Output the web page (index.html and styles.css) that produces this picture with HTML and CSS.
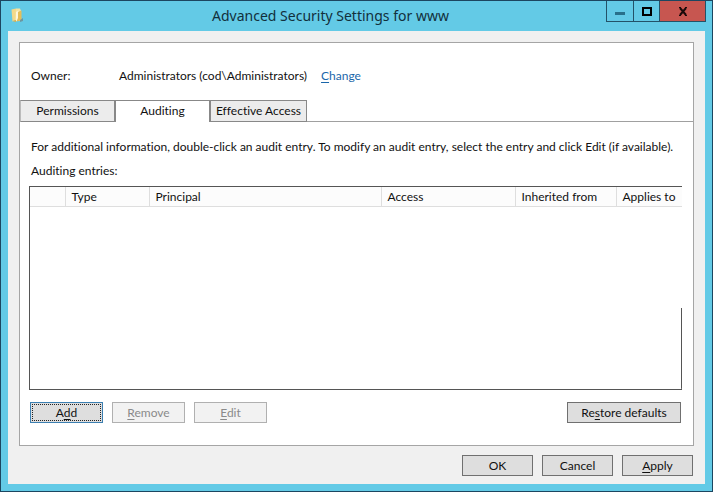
FILE: index.html
```html
<!DOCTYPE html>
<html lang="en">
<head>
    <meta charset="UTF-8">
    <meta name="viewport" content="width=device-width, initial-scale=1.0">
    <title>Advanced Security Settings for www</title>
    <link rel="stylesheet" href="styles.css">
</head>
<body>

<div class="window">
    <header class="titlebar">
        <svg class="folder-icon" width="14" height="16" viewBox="0 0 14 16" aria-hidden="true">
            <path d="M0.5 1.5L5 0.5V12L1.5 13.5Z" fill="#f3d98a"/>
            <path d="M5 0.5H9L10 3V13H4Z" fill="#f6e3a2"/>
            <path d="M5 4L7.5 2.5V11L5 13.5Z" fill="#fdf6dc"/>
            <path d="M7 4L10.5 2.5V12.5L5.5 13.5L7 10Z" fill="#e5bd58"/>
            <path d="M1.5 13L5 12V14Z" fill="#d9ae4a"/>
            <path d="M9 12L12 10V13L9 14Z" fill="#6d97a0"/>
        </svg>
        <h1>Advanced Security Settings for www</h1>
        <div class="window-controls">
            <button class="control minimize" aria-label="Minimize">
                <svg width="10" height="10" viewBox="0 0 10 10"><path d="M0 6H10V9H0Z" fill="#28708a"/></svg>
            </button>
            <button class="control maximize" aria-label="Maximize">
                <svg width="10" height="10" viewBox="0 0 10 10"><path d="M1 2H9V9H1Z" fill="none" stroke="#000" stroke-width="2"/></svg>
            </button>
            <button class="control close" aria-label="Close">
                <svg width="10" height="10" viewBox="0 0 10 10"><path d="M2 2L8 9M8 2L2 9" stroke="#1a0a0a" stroke-width="2"/><path d="M1 1.5H3M7 1.5H9M1 9.5H3M7 9.5H9" stroke="#1a0a0a" stroke-width="1"/></svg>
            </button>
        </div>
    </header>

    <main class="dialog">
        <section class="panel">
            <div class="owner">
                <span class="owner-label">Owner:</span>
                <span>Administrators (cod\Administrators)</span>
                <a href="#"><u>C</u>hange</a>
            </div>

            <div class="tabs" role="tablist">
                <button class="tab permissions" role="tab">Permissions</button>
                <button class="tab auditing" role="tab" aria-selected="true">Auditing</button>
                <button class="tab effective" role="tab">Effective Access</button>
            </div>

            <div class="tab-content">
                <p class="info">For additional information, double-click an audit entry. To modify an audit entry, select the entry and click Edit (if available).</p>
                <p class="entries-label" id="entries-label">Auditing entries:</p>
                <div class="entries">
                    <table aria-labelledby="entries-label">
                        <thead>
                            <tr>
                                <th class="col-icon"></th>
                                <th class="col-type">Type</th>
                                <th>Principal</th>
                                <th class="col-access">Access</th>
                                <th class="col-inherited">Inherited from</th>
                                <th class="col-applies">Applies to</th>
                            </tr>
                        </thead>
                    </table>
                </div>
                <div class="entry-actions">
                    <button class="btn focused">A<u>d</u>d</button>
                    <button class="btn" disabled><u>R</u>emove</button>
                    <button class="btn" disabled><u>E</u>dit</button>
                    <button class="btn restore">Re<u>s</u>tore defaults</button>
                </div>
            </div>
        </section>

        <footer class="dialog-actions">
            <button class="btn">OK</button>
            <button class="btn">Cancel</button>
            <button class="btn"><u>A</u>pply</button>
        </footer>
    </main>
</div>

</body>
</html>
```
FILE: styles.css
```css
* {
    box-sizing: border-box;
    margin: 0;
    padding: 0;
}

body {
    font-family: Lato, 'Open Sans', sans-serif;
    font-size: 12px;
    line-height: 16px;
    font-variant-ligatures: none;
    color: #111;
}

button {
    font: inherit;
    font-variant-ligatures: none;
    color: inherit;
}

u {
    text-underline-offset: 2px;
}

/* Window frame */
.window {
    display: flex;
    flex-direction: column;
    min-height: 100vh;
    background: #63cae6;
    border: 1px solid #1c4660;
    padding: 0 7px 7px;
}

.titlebar {
    display: flex;
    align-items: flex-start;
    height: 30px;
}

.folder-icon {
    flex: none;
    margin: 7px 0 0 3px;
}

.titlebar h1 {
    flex: 1;
    padding-left: 30px;
    font-family: 'Noto Sans', 'Open Sans', sans-serif;
    font-size: 14px;
    font-weight: normal;
    line-height: 30px;
    text-align: center;
    color: #12303c;
}

.window-controls {
    display: flex;
    margin-right: -1px;
}

.control {
    display: flex;
    align-items: center;
    justify-content: center;
    width: 28px;
    height: 21px;
    background: none;
    border: 1px solid #235268;
    border-top: none;
}

.control + .control {
    border-left: none;
}

.control.maximize {
    width: 26px;
}

.control.close {
    width: 46px;
    background: #c75650;
}

/* Dialog */
.dialog {
    flex: 1;
    display: flex;
    flex-direction: column;
    background: #f0f0f0;
    padding: 11px 11px 8px;
}

.panel {
    flex: 1;
    display: flex;
    flex-direction: column;
    background: #fff;
    border: 1px solid #a5a5a5;
}

.owner {
    display: flex;
    padding: 25px 10px 16px 11px;
}

.owner-label {
    width: 88px;
}

.owner a {
    margin-left: 14px;
    color: #1a66aa;
    text-decoration: none;
}

/* Tabs */
.tabs {
    display: flex;
    height: 22px;
    background: linear-gradient(#a0a0a0, #a0a0a0) bottom / 100% 1px no-repeat;
}

.tab {
    background: #ececec;
    border: 1px solid #888;
    white-space: nowrap;
}

.tab.permissions {
    width: 96px;
    border-left-color: #bbb;
    border-right-width: 2px;
}

.tab.auditing {
    width: 93px;
    background: #fff;
    border-width: 1px 0 0;
    padding-bottom: 1px;
}

.tab.effective {
    width: 98px;
    border-left-width: 2px;
}

.tab-content {
    flex: 1;
    display: flex;
    flex-direction: column;
    padding: 17px 11px 22px 9px;
}

.info {
    margin-bottom: 8px;
    padding-left: 2px;
}

.entries-label {
    margin-bottom: 7px;
    padding-left: 2px;
}

/* Entries list, its right edge is drawn on the lower part only */
.entries {
    flex: 1;
    border: 1px solid #555;
    border-right: none;
    background: linear-gradient(#555, #555) right bottom / 1px 40% no-repeat;
}

table {
    width: 100%;
    table-layout: fixed;
    border-collapse: collapse;
}

th {
    height: 19px;
    padding: 2px 0 0 6px;
    background: #fcfcfc;
    border-right: 1px solid #dedede;
    border-bottom: 1px solid #dedede;
    font-weight: normal;
    text-align: left;
    white-space: nowrap;
}

.col-icon {
    width: 35px;
}

.col-type {
    width: 84px;
}

.col-access {
    width: 134px;
}

.col-inherited {
    width: 101px;
}

.col-applies {
    width: 66px;
    border-right: none;
}

/* Buttons */
.btn {
    width: 71px;
    height: 21px;
    background: #dedede;
    border: 1px solid #707070;
    line-height: 18px;
}

.btn:disabled {
    background: #f2f2f2;
    border-color: #b0b0b0;
    color: #8a8a8a;
}

.btn.focused {
    border: 1px solid #3c7fb1;
    outline: 1px dotted #222;
    outline-offset: -3px;
}

.entry-actions {
    display: flex;
    gap: 9px;
    margin-top: 12px;
    padding: 0 1px;
}

.entry-actions .btn {
    width: 73px;
}

.entry-actions .restore {
    width: 114px;
    margin-left: auto;
}

.dialog-actions {
    display: flex;
    justify-content: flex-end;
    gap: 9px;
    padding: 9px 1px 0 0;
}
```
